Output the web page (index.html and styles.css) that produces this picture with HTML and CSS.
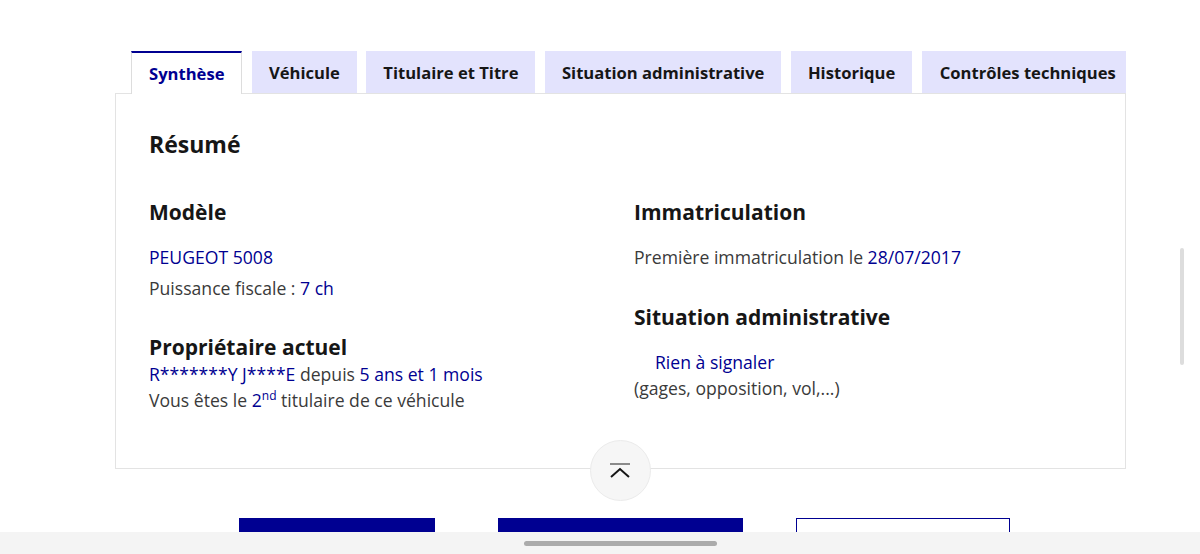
FILE: index.html
```html
<!DOCTYPE html>
<html lang="fr">
<head>
<meta charset="utf-8">
<title>Synthèse du véhicule</title>
<link rel="stylesheet" href="styles.css">
</head>
<body>
<div class="page">
  <nav class="tabs">
    <div class="tab active">Synthèse</div>
    <div class="tab">Véhicule</div>
    <div class="tab">Titulaire et Titre</div>
    <div class="tab">Situation administrative</div>
    <div class="tab">Historique</div>
    <div class="tab tab-last">Contrôles techniques</div>
  </nav>
  <section class="panel">
    <h2 class="title">Résumé</h2>
    <div class="grid">
      <div class="col">
        <h3 class="head">Modèle</h3>
        <p class="line"><span class="blue">PEUGEOT 5008</span></p>
        <p class="line">Puissance fiscale : <span class="blue">7 ch</span></p>
        <h3 class="head head-owner">Propriétaire actuel</h3>
        <p class="line tight"><span class="blue">R*******Y J****E</span> depuis <span class="blue">5 ans et 1 mois</span></p>
        <p class="line tight">Vous êtes le <span class="blue">2<sup>nd</sup></span> titulaire de ce véhicule</p>
      </div>
      <div class="col">
        <h3 class="head">Immatriculation</h3>
        <p class="line">Première immatriculation le <span class="blue">28/07/2017</span></p>
        <h3 class="head head-situation">Situation administrative</h3>
        <p class="line tight indent status"><span class="blue">Rien à signaler</span></p>
        <p class="line tight">(gages, opposition, vol,...)</p>
      </div>
    </div>
    <button class="to-top" type="button" aria-label="Replier">
      <svg width="22" height="16" viewBox="0 0 22 16">
        <line x1="1" y1="1" x2="21" y2="1" stroke="#8a8a8a" stroke-width="2"/>
        <polyline points="2,14 11,6 20,14" fill="none" stroke="#161616" stroke-width="2"/>
      </svg>
    </button>
  </section>
  <div class="actions">
    <div class="btn btn-1"></div>
    <div class="btn btn-2"></div>
    <div class="btn btn-3"></div>
  </div>
</div>
<div class="scrollbar"></div>
<div class="bottom-bar"><div class="handle"></div></div>
</body>
</html>
```
FILE: styles.css
```css
html, body {
  margin: 0;
  padding: 0;
  background: #ffffff;
  overflow: hidden;
}
body {
  font-family: "Open Sans", "Liberation Sans", sans-serif;
  color: #3a3a3a;
  width: 1200px;
  height: 554px;
}
.page {
  padding-top: 51px;
  margin-left: 115px;
  width: 1011px;
}
.tabs {
  display: flex;
  gap: 9.5px;
  padding-left: 16px;
  height: 42px;
  position: relative;
  z-index: 2;
}
.tab {
  height: 42px;
  box-sizing: border-box;
  padding: 0 17px;
  background: #e3e3fd;
  color: #161616;
  font-weight: 700;
  font-size: 16.6px;
  display: flex;
  align-items: center;
  white-space: nowrap;
}
.tab.active {
  background: #ffffff;
  color: #000091;
  border-top: 2px solid #000091;
  border-left: 1px solid #dddddd;
  border-right: 1px solid #dddddd;
  height: 43px;
  padding: 0 17px;
}
.tab-last {
  flex: 1;
  min-width: 0;
  overflow: hidden;
  padding: 0 0 0 18px;
}
.panel {
  position: relative;
  border: 1px solid #e3e3e3;
  height: 376px;
  box-sizing: border-box;
  padding: 34px 34px 0 33px;
}
.title {
  margin: 0;
  font-size: 23px;
  line-height: 32px;
  font-weight: 700;
  color: #161616;
}
.grid {
  display: grid;
  grid-template-columns: 1fr 1fr;
  column-gap: 28px;
  margin-top: 38px;
}
.head {
  margin: 0 0 16px 0;
  font-size: 21px;
  line-height: 28px;
  font-weight: 700;
  color: #161616;
}
.head-owner {
  margin-top: 29px;
  margin-bottom: 0;
}
.head-situation {
  margin-top: 30px;
  margin-bottom: 18px;
}
.line {
  margin: 0;
  font-size: 17.6px;
  line-height: 31px;
  white-space: nowrap;
}
.line.tight {
  line-height: 26px;
}
.indent {
  padding-left: 21px;
}
.blue {
  color: #000091;
}
sup {
  font-size: 12px;
  line-height: 0;
  vertical-align: 7px;
}
.to-top {
  position: absolute;
  left: 50%;
  bottom: -33px;
  width: 61px;
  height: 61px;
  margin-left: -31px;
  border-radius: 50%;
  background: #f6f6f6;
  border: 1px solid #ebebeb;
  padding: 0;
  display: flex;
  align-items: center;
  justify-content: center;
}
.actions {
  display: flex;
  margin-top: 49px;
  padding-left: 124px;
}
.btn {
  height: 40px;
  box-sizing: border-box;
}
.btn-1 {
  width: 196px;
  background: #000091;
}
.btn-2 {
  width: 245px;
  margin-left: 63px;
  background: #000091;
}
.btn-3 {
  width: 214px;
  margin-left: 53px;
  border: 1px solid #000091;
  background: #ffffff;
}
.scrollbar {
  position: fixed;
  left: 1180px;
  top: 248px;
  width: 4px;
  height: 117px;
  border-radius: 2px;
  background: #dddddd;
}
.bottom-bar {
  position: fixed;
  left: 0;
  bottom: 0;
  width: 1200px;
  height: 22px;
  background: #f4f4f4;
}
.handle {
  margin: 9px 0 0 524px;
  width: 193px;
  height: 5px;
  border-radius: 3px;
  background: #ababab;
}
```
